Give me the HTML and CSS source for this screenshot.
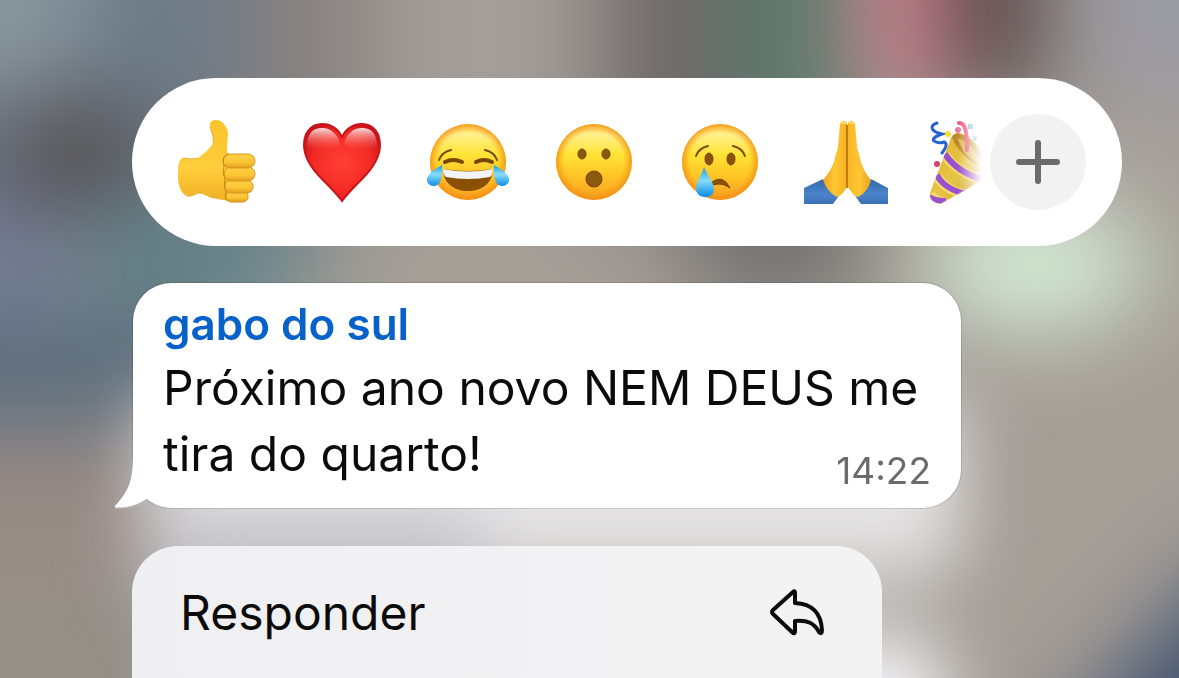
FILE: index.html
```
<!DOCTYPE html>
<html lang="pt-BR">
<head>
<meta charset="utf-8">
<meta name="viewport" content="width=device-width, initial-scale=1.0">
<title>Mensagem</title>
<link rel="stylesheet" href="styles.css">
</head>
<body>

<!-- Blurred wallpaper -->
<svg class="backdrop" viewBox="0 0 1179 678" preserveAspectRatio="none" aria-hidden="true">
  <defs>
    <filter id="soft" filterUnits="userSpaceOnUse" x="-300" y="-300" width="1779" height="1278" color-interpolation-filters="sRGB"><feGaussianBlur stdDeviation="36"/><feGaussianBlur stdDeviation="32"/></filter>
    <filter id="glow" filterUnits="userSpaceOnUse" x="-300" y="-300" width="1779" height="1278" color-interpolation-filters="sRGB"><feGaussianBlur stdDeviation="26"/><feGaussianBlur stdDeviation="24"/></filter>
  </defs>
  <rect width="1179" height="678" fill="#a49d97"/>
  <g filter="url(#soft)">
    <path fill="#a59e97" d="M-300-300H1500V1000H-300Z"/>
    <path fill="#6d7b88" d="M-300-300H240V150H-300Z"/>
    <ellipse cx="0" cy="0" rx="90" ry="100" fill="#8c989f"/>
    <path fill="#888180" d="M240-300H370V200H240Z"/>
    <path fill="#a39e99" d="M370-300H600V200H370Z"/>
    <path fill="#70696a" d="M600-300H735V200H600Z"/>
    <path fill="#597b6c" d="M735-300H855V200H735Z"/>
    <path fill="#e38598" d="M862-300H938V100H862Z"/>
    <path fill="#4e4040" d="M945-300H1040V100H945Z"/>
    <path fill="#9c9ca4" d="M1080-300H1500V100H1080Z"/>
    <path fill="#6b7684" d="M-300 110H200V240H-300Z"/>
    <ellipse cx="75" cy="155" rx="75" ry="50" fill="#504543"/>
    <ellipse cx="0" cy="255" rx="70" ry="60" fill="#747c98"/>
    <path fill="#628289" d="M90 190H310V320H90Z"/>
    <path fill="#5b6c7b" d="M-300 310H200V430H-300Z"/>
    <path fill="#998b85" d="M-300 440H200V570H-300Z"/>
    <path fill="#949088" d="M-300 570H200V1000H-300Z"/>
    <path fill="#72706f" d="M690 160H860V310H690Z"/>
    <ellipse cx="1035" cy="265" rx="115" ry="62" fill="#dbf3dd"/>
    <path fill="#40516e" d="M1230 560L1060 740V1000H1500V560Z"/>
  </g>
  <g filter="url(#glow)">
    <path fill="#e6e5e6" d="M145 400H960V570H145Z"/>
    <path fill="#c4c4c9" d="M140 510H480V590H140Z"/>
    <path fill="#b9b6b3" d="M180 585H930V655H180Z"/>
    <path fill="#f6f6f9" d="M195 650H945V900H195Z"/>
  </g>
</svg>

<main class="screen">

  <!-- Reactions -->
  <div class="reactions">
    <div class="emoji-list">
      <button type="button" class="emoji" aria-label="Joinha">
        <svg viewBox="0 0 84 84">
          <defs>
            <linearGradient id="hand" x1="0" y1="0" x2="0" y2="1"><stop offset="0" stop-color="#fbc32a"/><stop offset=".6" stop-color="#ffce3c"/><stop offset="1" stop-color="#efb026"/></linearGradient>
            <linearGradient id="finger" x1="0" y1="0" x2="0" y2="1"><stop offset="0" stop-color="#ffd148"/><stop offset=".6" stop-color="#fdc534"/><stop offset="1" stop-color="#e09e1f"/></linearGradient>
          </defs>
          <path fill="url(#hand)" d="M9 38C15 39 20 39 24 38C31 33 38 27 39 22C40 16 37 12 36 7C35 2 38 0 42 0C48 0 53 6 54 13C54 20 52 27 54 34L64 38L66 80C56 81 46 80 39 78C33 76 30 73 25 73C20 74 18 77 13 76C6 74 3 62 4 51C4 43 6 38 9 38Z"/>
          <path fill="none" stroke="#dfa021" stroke-width="1" opacity=".7" d="M9 38C15 39 20 39 24 38M39 22C40 16 37 12 36 7M13 76C18 77 20 74 25 73C30 73 33 76 39 78"/>
          <g fill="url(#finger)" stroke="#d9961c" stroke-width="1">
            <rect x="52" y="71" width="22" height="11" rx="5"/>
            <rect x="51" y="60" width="28" height="13" rx="6"/>
            <rect x="50" y="47" width="31" height="14" rx="7"/>
            <rect x="49" y="34" width="32" height="14" rx="7"/>
          </g>
          <path fill="none" stroke="#c78615" stroke-width="1" d="M55 34Q47 36 50 46Q48 53 51 59Q49 66 52 72Q50 77 53 81"/>
        </svg>
      </button>
      <button type="button" class="emoji" aria-label="Coração">
        <svg viewBox="0 0 84 84">
          <defs>
            <radialGradient id="heart" cx=".5" cy=".5" r=".58"><stop offset="0" stop-color="#ff4035"/><stop offset=".65" stop-color="#f42a25"/><stop offset="1" stop-color="#c4121a"/></radialGradient>
            <linearGradient id="shine" x1="0" y1="0" x2="0" y2="1"><stop offset="0" stop-color="#fff" stop-opacity=".85"/><stop offset="1" stop-color="#ff6a60" stop-opacity="0"/></linearGradient>
          </defs>
          <path fill="url(#heart)" stroke="#c8141b" stroke-width="2" d="M42 17C38 9 31 4 22 4C11 4 4 13 4 25C4 37 12 49 22 59C30 67 37 74 42 81C47 74 54 67 62 59C72 49 80 37 80 25C80 13 73 4 62 4C53 4 46 9 42 17Z"/>
          <path fill="url(#shine)" d="M7 27C7 13 13 8 22 8C31 8 37 14 40 23Q37 30 24 30Q12 30 7 27ZM77 27C77 13 71 8 62 8C53 8 47 14 44 23Q47 30 60 30Q72 30 77 27Z"/>
        </svg>
      </button>
      <button type="button" class="emoji" aria-label="Rindo com lágrimas">
        <svg viewBox="0 0 84 84">
          <defs>
            <linearGradient id="face" x1="0" y1="0" x2="0" y2="1"><stop offset="0" stop-color="#ffd85a"/><stop offset=".14" stop-color="#fff08b"/><stop offset=".4" stop-color="#ffe335"/><stop offset=".72" stop-color="#ffc024"/><stop offset="1" stop-color="#f99d20"/></linearGradient>
            <radialGradient id="rim"><stop offset=".78" stop-color="#f59a18" stop-opacity="0"/><stop offset="1" stop-color="#f28c12" stop-opacity=".8"/></radialGradient>
            <linearGradient id="tear" x1="0" y1="0" x2="0" y2="1"><stop offset="0" stop-color="#1b9ddf"/><stop offset=".45" stop-color="#87dcf8"/><stop offset="1" stop-color="#0a8be6"/></linearGradient>
          </defs>
          <circle cx="42" cy="42" r="38" fill="url(#face)"/>
          <circle cx="42" cy="42" r="38" fill="url(#rim)"/>
          <g fill="none" stroke="#7b4702" stroke-linecap="round">
            <path stroke-width="2" d="M13 40Q16 32 25 30M59 30Q68 32 71 40"/>
            <path stroke-width="4" d="M19 42Q27 38 36 42M50 42Q58 38 66 42"/>
          </g>
          <path fill="#8a5104" d="M17 49Q42 53 67 49C67 63 56 71 42 71S17 63 17 49Z"/>
          <path fill="#f4f3f8" d="M17 49Q42 54 67 49Q67 55 64 57Q42 61 20 57Q17 55 17 49Z"/>
          <path fill="url(#tear)" d="M16 45C17 56 15 66 8 66C2 66-1 60 2 56Q5 51 16 45ZM68 45C67 56 69 66 76 66C82 66 85 60 82 56Q79 51 68 45Z"/>
        </svg>
      </button>
      <button type="button" class="emoji" aria-label="Surpreso">
        <svg viewBox="0 0 84 84">
          <circle cx="42" cy="42" r="38" fill="url(#face)"/>
          <circle cx="42" cy="42" r="38" fill="url(#rim)"/>
          <g fill="#8b5a0c" stroke="#754000" stroke-width="1">
            <ellipse cx="30" cy="34" rx="4" ry="5"/>
            <ellipse cx="54" cy="34" rx="4" ry="5"/>
            <ellipse cx="42" cy="59" rx="8" ry="8"/>
          </g>
        </svg>
      </button>
      <button type="button" class="emoji" aria-label="Chorando">
        <svg viewBox="0 0 84 84">
          <circle cx="42" cy="42" r="38" fill="url(#face)"/>
          <circle cx="42" cy="42" r="38" fill="url(#rim)"/>
          <g fill="#8b5206" stroke="#754000" stroke-width="1">
            <ellipse cx="31" cy="39" rx="4" ry="6"/>
            <ellipse cx="53" cy="39" rx="4" ry="6"/>
            <path d="M34 62Q45 54 52 68Q44 62 35 65Z"/>
          </g>
          <path fill="none" stroke="#7b4702" stroke-width="2" stroke-linecap="round" d="M18 36Q21 28 30 26M55 26Q64 28 67 36"/>
          <path fill="url(#tear)" d="M26 47C29 55 36 62 36 69C36 75 32 77 27 77C21 77 18 73 18 68C18 61 24 55 26 47Z"/>
        </svg>
      </button>
      <button type="button" class="emoji" aria-label="Mãos em oração">
        <svg viewBox="0 0 84 84">
          <defs>
            <linearGradient id="sleeve" x1="0" y1="0" x2="0" y2="1"><stop offset="0" stop-color="#3466a8"/><stop offset=".6" stop-color="#4a84cc"/><stop offset="1" stop-color="#3d70b4"/></linearGradient>
            <linearGradient id="palm-left"><stop offset="0" stop-color="#f0a51c"/><stop offset=".5" stop-color="#ffc633"/><stop offset="1" stop-color="#f5b021"/></linearGradient>
            <linearGradient id="palm-right"><stop offset="0" stop-color="#f9b727"/><stop offset=".5" stop-color="#ffc633"/><stop offset="1" stop-color="#e9a11c"/></linearGradient>
          </defs>
          <path fill="url(#sleeve)" d="M0 68L19 59Q25 70 36 74Q33 79 29 84H0Z"/>
          <path fill="url(#sleeve)" d="M84 68L67 59Q61 70 50 74Q53 79 57 84H84Z"/>
          <path fill="url(#palm-left)" d="M36 4C37 0 43 0 43 4V67C40 72 37 76 33 77Q23 72 19 60C24 54 29 47 31 38C32 31 34 31 34 26Z"/>
          <path fill="url(#palm-right)" d="M51 4C50 0 44 0 44 4V67C47 72 50 76 54 77Q64 72 67 60C62 54 58 47 56 38C55 31 53 31 53 26Z"/>
          <path fill="none" stroke="#c07a10" stroke-width="2" d="M43 5V68"/>
          <path fill="none" stroke="#ffe06b" stroke-width="2" stroke-linecap="round" d="M38 3Q39 2 41 3M46 3Q48 2 49 3"/>
        </svg>
      </button>
      <button type="button" class="emoji" aria-label="Festa">
        <svg viewBox="0 0 84 84">
          <defs>
            <linearGradient id="cone" x1="0" y1="0" x2="1" y2="1"><stop offset="0" stop-color="#e2b02a"/><stop offset=".5" stop-color="#e6c445"/><stop offset="1" stop-color="#b98522"/></linearGradient>
            <clipPath id="cone-shape"><path d="M21 18Q25 9 37 16Q56 28 60 55Q40 68 10 84Q-1 82 0 73Z"/></clipPath>
          </defs>
          <g clip-path="url(#cone-shape)">
            <path fill="url(#cone)" d="M-2 8H70V86H-2Z"/>
            <path fill="none" stroke="#f2d96a" stroke-width="10" d="M15 35Q28 54 60 62M7 56Q14 69 36 75M0 74Q4 81 16 83"/>
            <path fill="none" stroke="#9b51cf" stroke-width="6" d="M15 34Q28 54 60 62M7 55Q14 69 36 74M-1 77Q5 81 16 81"/>
          </g>
          <path fill="#bd8b2a" d="M22 17Q26 10 37 17Q55 29 57 50Q42 44 31 32Q24 24 22 17Z"/>
          <path fill="#dcb95c" d="M27 18Q38 21 46 32Q53 40 56 49Q43 42 34 32Z"/>
          <g fill="none" stroke-linecap="round">
            <path stroke="#2462cf" stroke-width="3" d="M7 3Q0 5 3 10Q6 13 12 14Q1 18 4 21Q9 24 14 22Q19 24 12 33"/>
            <path stroke="#f4547a" stroke-width="4" d="M29 3Q34 2 36 12Q38 21 37 30"/>
          </g>
          <circle cx="18" cy="14" r="3" fill="#f3df2c"/>
          <circle cx="28" cy="10" r="3" fill="#e77bac"/>
          <circle cx="7" cy="44" r="3" fill="#db3f68"/>
          <g fill="#82b4e8"><rect x="38" y="4" width="5" height="5" rx="1"/><rect x="43" y="16" width="4" height="5" rx="1"/></g>
        </svg>
      </button>
    </div>
    <button type="button" class="more" aria-label="Mais reações">
      <svg viewBox="0 0 96 96"><path d="M48 29V67M29 48H67" fill="none" stroke="#6b6b6b" stroke-width="6" stroke-linecap="round"/></svg>
    </button>
  </div>

  <!-- Message -->
  <article class="bubble">
    <svg class="tail" viewBox="0 0 60 60" aria-hidden="true">
      <path fill="#fff" d="M19 0C19 30 16 38 1 55Q0 57 3 57Q18 57 31 49L48 36V0Z"/>
      <path fill="none" stroke="#bdbcbd" stroke-width="1" d="M1 57Q18 58 31 50"/>
    </svg>
    <h1 class="author">gabo do sul</h1>
    <p class="text">Próximo ano novo NEM DEUS me tira do quarto! <time class="time" datetime="14:22">14:22</time></p>
  </article>

  <!-- Context menu -->
  <nav class="menu">
    <button type="button" class="menu-item">
      <span>Responder</span>
      <svg class="reply" viewBox="0 0 56 48"><path d="M23 3L3 21Q1 23 3 25L22 43Q25 46 25 42V32C38 31 44 34 49 43Q52 46 52 41C51 24 43 15 25 14V4Q25 1 23 3Z" fill="none" stroke="#0b0b0b" stroke-width="4" stroke-linejoin="round"/></svg>
    </button>
  </nav>

</main>

</body>
</html>
```
FILE: styles.css
```
* {
  box-sizing: border-box;
}

body {
  margin: 0;
  height: 100vh;
  overflow: hidden;
  background-color: #a39c96;
  font-family: Inter, "Liberation Sans", sans-serif;
  color: #0b0b0b;
}

button {
  border: none;
  padding: 0;
  font-family: inherit;
  color: inherit;
  cursor: pointer;
}

svg {
  display: block;
}

.backdrop {
  position: fixed;
  top: 0;
  left: 0;
  width: 100%;
  height: 100%;
}

.screen {
  position: relative;
  display: flex;
  flex-direction: column;
  height: 100vh;
  padding: 78px 57px 0 132px;
}

/* Reactions */
.reactions {
  display: flex;
  align-items: center;
  gap: 8px;
  padding: 36px 36px 36px 42px;
  border-radius: 84px;
  background-color: #fff;
}

.emoji-list {
  display: flex;
  flex: 1;
  gap: 42px;
  min-width: 0;
  overflow: hidden;
  -webkit-mask-image: linear-gradient(to right, #000 calc(100% - 24px), transparent);
  mask-image: linear-gradient(to right, #000 calc(100% - 24px), transparent);
}

.emoji {
  flex: none;
  width: 84px;
  height: 84px;
  background: none;
}

.more {
  flex: none;
  width: 96px;
  height: 96px;
  border-radius: 50%;
  background-color: #f2f2f2;
}

/* Message */
.bubble {
  position: relative;
  margin: 37px 161px 0 1px;
  padding: 12px 30px 21px;
  border-radius: 38px;
  background-color: #fff;
  box-shadow: 0 0 0 1px rgba(0, 0, 0, 0.12);
}

.tail {
  position: absolute;
  left: -19px;
  bottom: -3px;
  width: 60px;
  height: 60px;
}

.author {
  margin: 0 0 2px;
  font-size: 44px;
  font-weight: 600;
  line-height: 58px;
  color: #0661cb;
}

/* sits above the tail */
.text {
  position: relative;
  display: flow-root;
  margin: 0;
  font-size: 48px;
  line-height: 66px;
}

.time {
  float: right;
  margin-top: 34px;
  font-size: 37px;
  line-height: 32px;
  color: #6b6b6b;
}

/* Context menu */
.menu {
  flex: 1;
  margin: 38px 240px 0 0;
  border-radius: 46px 46px 0 0;
  background: linear-gradient(to right, #efeff1, #f4f3f4);
}

.menu-item {
  display: flex;
  align-items: center;
  justify-content: space-between;
  width: 100%;
  padding: 34px 56px 34px 48px;
  background: none;
  font-size: 48px;
  line-height: 66px;
}

.reply {
  width: 56px;
  height: 48px;
}
```
